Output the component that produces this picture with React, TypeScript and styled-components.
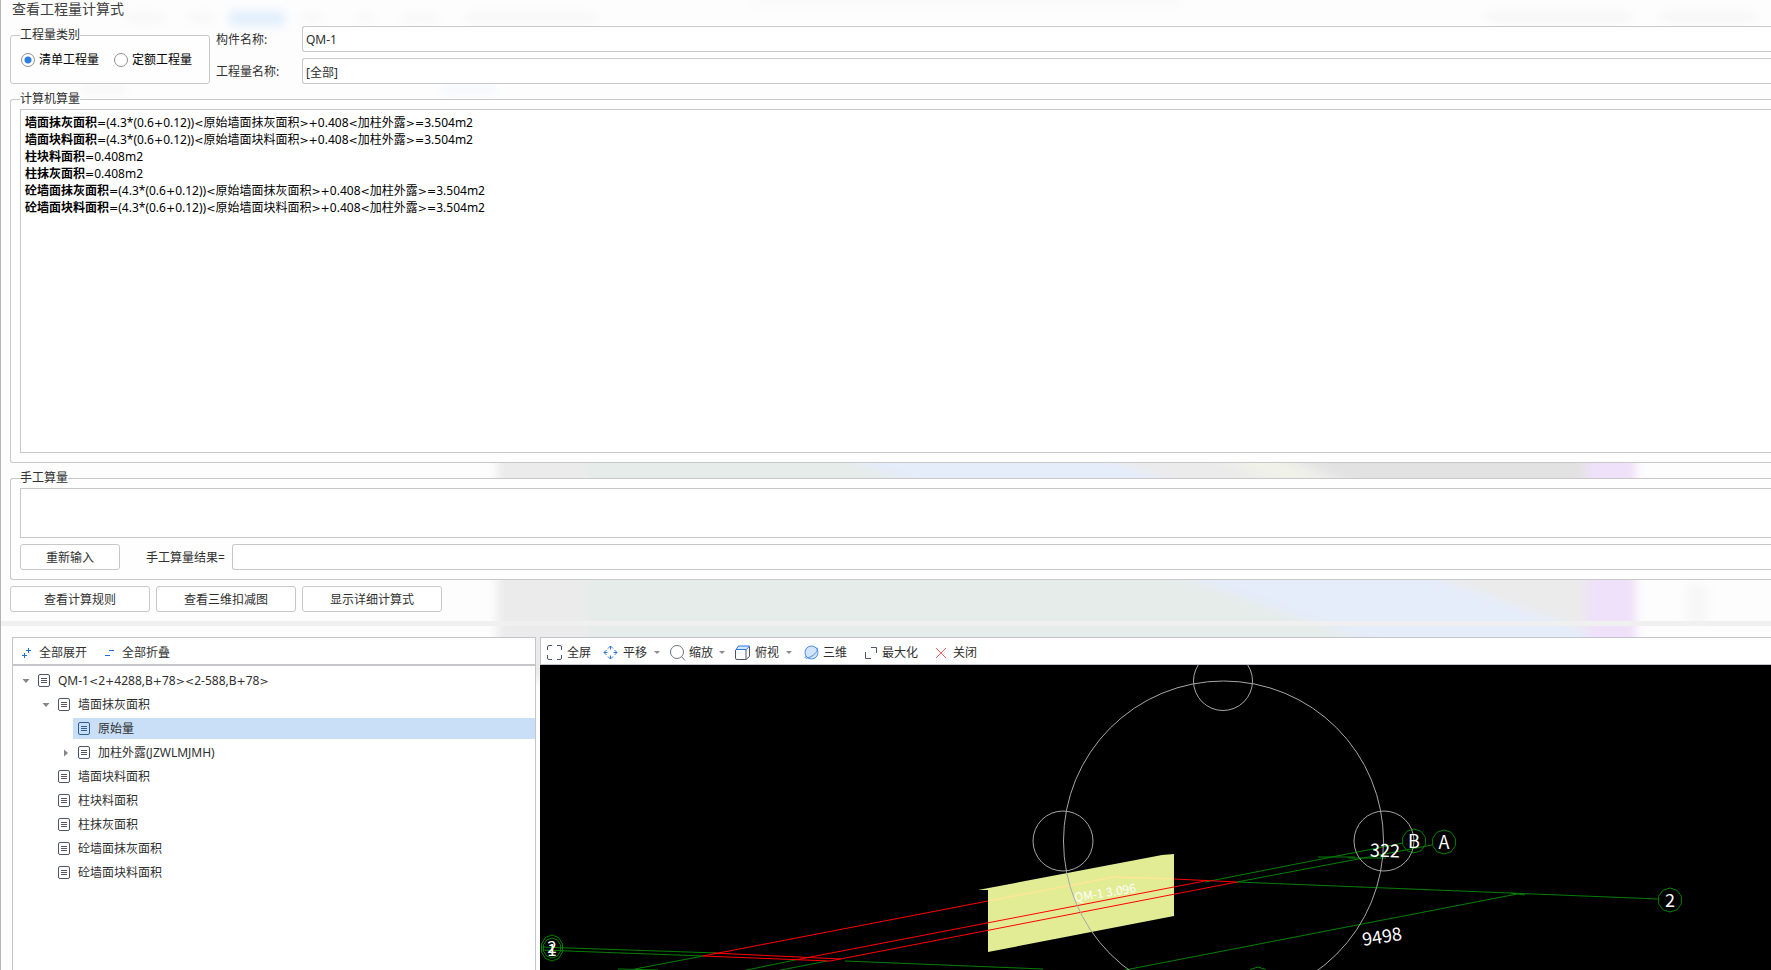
import React, { useState } from 'react';
import styled, { createGlobalStyle, css } from 'styled-components';

const GlobalStyle = createGlobalStyle`
  *, *::before, *::after { box-sizing: border-box; }
  html, body { margin: 0; padding: 0; }
  body, button, input, textarea {
    font-family: "Noto Sans", "Noto Sans CJK SC", sans-serif;
    font-size: 12px;
    line-height: 16px;
    color: #2f2f2f;
  }
`;

const line = '#c8c8c8';

const Dialog = styled.main`
  position: relative;
  display: flex;
  flex-direction: column;
  min-height: 100vh;
  overflow: hidden;
  background: #fdfdfd;
  border-left: 1px solid #b4b4b6;
`;

const Backdrop = styled.svg`
  position: absolute;
  top: 0;
  left: 0;
  width: 100%;
  height: 100%;
  pointer-events: none;
`;

const Content = styled.div`
  position: relative;
  display: flex;
  flex-direction: column;
  padding-left: 9px;
`;

const Title = styled.h1`
  margin: 0 0 9px 2px;
  font-size: 14px;
  font-weight: 400;
  line-height: 17px;
  color: #404040;
`;

const TopRow = styled.div`
  display: flex;
  align-items: flex-end;
  gap: 6px;
`;

const Group = styled.fieldset<{ $open?: boolean }>`
  min-width: 0;
  margin: 0;
  padding: 2px 0 9px 9px;
  background: #fefefe;
  border: 1px solid ${line};
  border-radius: 3px;
  ${(p) => p.$open && css`
    margin-top: 7px;
    border-right: 0;
    border-radius: 3px 0 0 3px;
  `}
`;

const KindGroup = styled(Group)`
  flex: none;
  width: 200px;
  padding: 9px 0 15px 10px;
`;

const Legend = styled.legend`
  padding: 0;
  line-height: 16px;
`;

const KindLegend = styled(Legend)`
  margin-left: -1px;
`;

const Radios = styled.div`
  display: flex;
  gap: 15px;
`;

const RadioLabel = styled.label`
  display: flex;
  align-items: center;
  gap: 4px;
  color: #000;
`;

const Radio = styled.input`
  appearance: none;
  width: 14px;
  height: 14px;
  margin: 0;
  border: 1px solid #8e8e8e;
  border-radius: 50%;
  background: #fff;
  &:checked {
    background: radial-gradient(circle, #2b7fe0 3px, #fff 4px);
  }
`;

const Names = styled.div`
  flex: 1;
  display: grid;
  grid-template-columns: 80px 1fr;
  align-items: center;
  gap: 6px;
`;

const NameLabel = styled.label`
  padding-top: 2px;
`;

const Field = styled.input`
  flex: 1;
  min-width: 0;
  height: 26px;
  padding: 1px 3px 0;
  background: #fff;
  border: 1px solid ${line};
  border-right: 0;
  border-radius: 3px 0 0 3px;
  outline: none;
`;

const Formulas = styled.div`
  height: 344px;
  padding: 4px;
  overflow: auto;
  background: #fff;
  border: 1px solid ${line};
  border-right: 0;
  color: #000;
`;

const Formula = styled.p`
  margin: 0;
  line-height: 17px;
  white-space: nowrap;
`;

const Operator = styled.span`
  font-family: "DejaVu Sans", sans-serif;
  font-size: 11px;
  line-height: 1;
`;

const ManualInput = styled.textarea`
  display: block;
  width: 100%;
  height: 50px;
  resize: none;
  background: #fff;
  border: 1px solid ${line};
  border-right: 0;
  outline: none;
`;

const ResultRow = styled.div`
  display: flex;
  align-items: center;
  margin-top: 6px;
`;

const ResultLabel = styled.label`
  margin: 0 7px 0 26px;
  padding-top: 2px;
`;

const Button = styled.button<{ $width: number }>`
  width: ${(p) => p.$width}px;
  height: 26px;
  padding: 2px 0 0;
  background: #fff;
  border: 1px solid ${line};
  border-radius: 3px;
`;

const Actions = styled.div`
  display: flex;
  gap: 6px;
  margin: 6px 0 9px;
`;

const Splitter = styled.div`
  position: relative;
  height: 5px;
  background: #f0f0f0;
`;

const Lower = styled.div`
  position: relative;
  flex: 1;
  display: flex;
  gap: 4px;
  padding: 11px 0 0 11px;
`;

const TreePanel = styled.section`
  flex: none;
  display: flex;
  flex-direction: column;
  width: 524px;
  background: #fff;
  border: 1px solid #c4c4cc;
  border-bottom: 0;
`;

const ViewPanel = styled.section`
  flex: 1;
  min-width: 0;
  display: flex;
  flex-direction: column;
  background: #fff;
  border-top: 1px solid #c4c4cc;
`;

const TreeTools = styled.div`
  display: flex;
  align-items: center;
  gap: 15px;
  height: 28px;
  padding: 3px 0 0 6px;
  border-bottom: 2px solid #c4c6ca;
`;

const ViewTools = styled.div`
  display: flex;
  align-items: center;
  height: 27px;
  padding: 3px 0 0 6px;
  border-left: 1px solid #c4c4cc;
  border-bottom: 1px solid #c4c4cc;
`;

const Tool = styled.button<{ $gap?: number; $after?: number }>`
  display: flex;
  align-items: center;
  gap: ${(p) => p.$gap ?? 4}px;
  margin-right: ${(p) => p.$after ?? 0}px;
  padding: 0;
  background: none;
  border: 0;
  white-space: nowrap;
  svg { flex: none; }
`;

const Caret = styled.span`
  width: 5px;
  margin-left: 3px;
  border: 3px solid transparent;
  border-top-color: #8b8b8b;
  border-bottom: 0;
`;

const Tree = styled.ul`
  flex: 1;
  margin: 0;
  padding: 4px 0 0;
  list-style: none;
`;

const TreeRow = styled.li<{ $level: number }>`
  display: flex;
  height: 21px;
  margin-bottom: 3px;
  padding-left: ${(p) => p.$level * 20}px;
`;

const Twist = styled.span`
  display: flex;
  align-items: center;
  justify-content: flex-end;
  width: 20px;
  padding-right: 3px;
`;

const NodeLabel = styled.span<{ $selected?: boolean }>`
  flex: 1;
  display: flex;
  align-items: center;
  gap: 8px;
  padding-left: 5px;
  color: #2f2f2f;
  background: ${(p) => (p.$selected ? '#c9dff8' : 'transparent')};
`;

const Canvas = styled.svg`
  flex: 1;
  width: 100%;
  min-height: 305px;
  background: #000;
  font-family: "Noto Sans CJK SC", sans-serif;
`;

const DocIcon = ({ selected }: { selected?: boolean }) => (
  <svg width="12" height="14" viewBox="0 0 12 14" fill="none" stroke={selected ? '#2f5f96' : '#4f5468'}>
    <rect x="0.5" y="0.5" width="11" height="12" rx="1.5" />
    <path d="M3 4.5h6M3 6.5h6M3 8.5h6" />
  </svg>
);

const ExpandIcon = () => (
  <svg width="16" height="16" fill="none" stroke="#1b6fd6">
    <path d="M3 10.5h5M5.5 8v5M7 5.5h5M9.5 3v5" />
  </svg>
);

const CollapseIcon = () => (
  <svg width="16" height="16" fill="none" stroke="#1b6fd6">
    <path d="M3 10.5h5M7 5.5h5" />
  </svg>
);

const FullIcon = () => (
  <svg width="16" height="16" fill="none" stroke="#50566a">
    <path d="M0.5 5V2Q0.5 0.5 2 0.5H5M10 0.5h3Q14.5 0.5 14.5 2V5M14.5 10v3Q14.5 14.5 13 14.5H10M5 14.5H2Q0.5 14.5 0.5 13V10" />
  </svg>
);

const PanIcon = () => (
  <svg width="16" height="16" fill="none" stroke="#2b78dc">
    <path d="M7.500 4.500V1M5 3.500L7.500 1l2.500 2.500M7.500 10.500v3.500M5 11.500l2.500 2.500 2.500-2.500M4.500 7.500H1M3.500 5l-2.500 2.500 2.500 2.500M10.500 7.500h3.500M11.500 5l2.500 2.500-2.500 2.500" />
  </svg>
);

const ZoomIcon = () => (
  <svg width="16" height="16" fill="none" stroke="#6d7280">
    <circle cx="7" cy="7" r="6.500" />
    <path d="M11.500 11.500L15 15.500" />
  </svg>
);

const CubeIcon = () => (
  <svg width="16" height="16" fill="none">
    <path d="M0.500 5V13Q0.500 14.500 2 14.500H11L14.500 11.500V1.500M11 4.500V14.500" stroke="#50566a" />
    <path d="M1 4.500L3.500 1H14.500L11.500 4.500Z" fill="#d5e6fc" stroke="#2b78dc" />
  </svg>
);

const SphereIcon = () => (
  <svg width="16" height="16" fill="none" stroke="#4a90e8">
    <circle cx="7.500" cy="7.500" r="6.500" fill="#d2e4fb" />
    <path d="M1.500 11.500C0 14 4 13.500 8 11C12 8.500 14.500 4.500 13 2.500" />
  </svg>
);

const MaxIcon = () => (
  <svg width="14" height="14" fill="none" stroke="#50566a">
    <path d="M7 1.500H12.500V7M1.500 6V12.500H7" />
  </svg>
);

const CloseIcon = () => (
  <svg width="12" height="12" fill="none" stroke="#f5605c">
    <path d="M1 1L11 11M11 1L1 11" />
  </svg>
);

const Arrow = ({ open }: { open: boolean }) => (
  <svg width="8" height="8" fill="#858585">
    <path d={open ? 'M0.500 2H7.500L4 6Z' : 'M2 0.500V7.500L6 4Z'} />
  </svg>
);

/* Sets the arithmetic and angle signs of an expression in the wider face. */
const Expression = ({ text }: { text: string }) => (
  <span>
    {text.split(/([=<>+]+)/).map((part, i) => (i % 2 ? <Operator key={i}>{part}</Operator> : part))}
  </span>
);

const decagon = (cx: number, cy: number, rx: number, ry: number) =>
  Array.from({ length: 10 }, (_, i) => {
    const a = (Math.PI * 2 * i) / 10 - Math.PI / 2;
    return `${(cx + rx * Math.cos(a)).toFixed(1)},${(cy + ry * Math.sin(a)).toFixed(1)}`;
  }).join(' ');

const formulas = [
  ['墙面抹灰面积', '=(4.3*(0.6+0.12))<原始墙面抹灰面积>+0.408<加柱外露>=3.504m2'],
  ['墙面块料面积', '=(4.3*(0.6+0.12))<原始墙面块料面积>+0.408<加柱外露>=3.504m2'],
  ['柱块料面积', '=0.408m2'],
  ['柱抹灰面积', '=0.408m2'],
  ['砼墙面抹灰面积', '=(4.3*(0.6+0.12))<原始墙面抹灰面积>+0.408<加柱外露>=3.504m2'],
  ['砼墙面块料面积', '=(4.3*(0.6+0.12))<原始墙面块料面积>+0.408<加柱外露>=3.504m2'],
];

type Node = { text: string; level: number; open?: boolean };

const nodes: Node[] = [
  { text: 'QM-1<2+4288,B+78><2-588,B+78>', level: 0, open: true },
  { text: '墙面抹灰面积', level: 1, open: true },
  { text: '原始量', level: 2 },
  { text: '加柱外露(JZWLMJMH)', level: 2, open: false },
  { text: '墙面块料面积', level: 1 },
  { text: '柱块料面积', level: 1 },
  { text: '柱抹灰面积', level: 1 },
  { text: '砼墙面抹灰面积', level: 1 },
  { text: '砼墙面块料面积', level: 1 },
];

const Haze = () => (
  <Backdrop aria-hidden="true">
    <defs>
      <filter id="soft" x="-20%" y="-20%" width="140%" height="140%">
        <feGaussianBlur stdDeviation="5" />
      </filter>
      <clipPath id="pane"><rect x="496" y="440" width="1139" height="240" /></clipPath>
    </defs>
    <g filter="url(#soft)">
      <rect x="228" y="11" width="56" height="15" fill="#e2effd" />
      <rect x="125" y="13" width="38" height="10" fill="#f7f7f8" />
      <rect x="188" y="13" width="24" height="10" fill="#f7f7f8" />
      <rect x="300" y="13" width="22" height="10" fill="#f8f8f8" />
      <rect x="356" y="13" width="16" height="10" fill="#f8f8f8" />
      <rect x="402" y="13" width="34" height="10" fill="#f8f8f8" />
      <rect x="465" y="13" width="130" height="10" fill="#f7f7f7" />
      <rect x="750" y="0" width="430" height="4" fill="#f6f6f7" />
      <rect x="1485" y="12" width="145" height="10" fill="#f6f6f7" />
      <rect x="1660" y="12" width="95" height="10" fill="#f6f6f7" />
      <rect x="80" y="86" width="45" height="8" fill="#f6f6f6" />
      <rect x="440" y="86" width="55" height="8" fill="#f3f7fd" />
      <rect x="1685" y="584" width="22" height="40" fill="#f7f7f7" />
      <g clipPath="url(#pane)">
        <rect x="490" y="440" width="1145" height="240" fill="#e6ece9" />
        <rect x="480" y="440" width="105" height="240" fill="#ebebeb" />
        <path d="M789 440L1477 680H1800V440Z" fill="#e5ecfa" />
        <path d="M1055 440L1720 680V440Z" fill="#ebebeb" />
        <path d="M1180 440H1250L1340 490H1290Z" fill="#f0f1e9" />
        <path d="M1250 440H1640V500H1390Z" fill="#e2e2e2" />
        <rect x="1585" y="440" width="60" height="240" fill="#efe1f9" />
      </g>
    </g>
  </Backdrop>
);

const Scene = () => (
  <Canvas role="img" aria-label="QM-1">
    <g transform="translate(-540 -665)">
      <path d="M978 890L1162 855L1174 854V916L988 952V890Z" fill="#e2ec95" />
      <path d="M988 901L1114 877L1174 879" fill="none" stroke="#ffe694" strokeWidth="1.500" />
      <g fill="none" stroke="#008000">
        <path d="M541 947L717 953M541 950L703 956L635 969M618 969L658 970M845 961L1043 969M795 960L742 971M827 961L776 971" />
        <path d="M1205 882L1403 843M1237 882L1432 845M1318 857H1355M1348 858H1386M1237 882L1658 899M1511 893L1525 895M1517 894L1120 971" />
        <polygon points={decagon(552, 948, 11, 13)} />
        <polygon points={decagon(552, 948, 9, 10)} />
        <polygon points={decagon(1414, 841, 12, 12)} />
        <polygon points={decagon(1444, 842, 12, 12)} />
        <polygon points={decagon(1670, 900, 12, 12)} />
        <polygon points={decagon(1258, 979, 12, 12)} />
      </g>
      <path
        d="M703 956L988 901M1174 879L1237 882M795 960L1205 881M830 961L1237 882M713 953L841 959M703 956L830 961"
        fill="none" stroke="#ff0000"
      />
      <g fill="none" stroke="#a6a6a6">
        <circle cx="1223.500" cy="841" r="160" />
        <circle cx="1223" cy="681" r="29.500" />
        <circle cx="1063" cy="841" r="30" />
        <circle cx="1384" cy="841" r="30" />
      </g>
      <g fill="#fff" fontSize="18" textAnchor="middle">
        <text x="552" y="953" fontSize="17">2</text>
        <text x="552" y="956" fontSize="17">1</text>
        <text x="1414" y="848">B</text>
        <text x="1444" y="849">A</text>
        <text x="1670" y="907">2</text>
        <text x="1385" y="857" transform="rotate(2 1385 850)">322</text>
        <text x="1382" y="943" transform="rotate(-9 1382 937)">9498</text>
        <text x="1105" y="897" fontSize="12" transform="rotate(-9 1105 892)">QM-1 3.096</text>
      </g>
    </g>
  </Canvas>
);

export default function App() {
  const [kind, setKind] = useState('list');
  const [selected, setSelected] = useState('原始量');

  return (
    <>
      <GlobalStyle />
      <Dialog>
        <Haze />
        <Content>
          <Title>查看工程量计算式</Title>
          <TopRow>
            <KindGroup>
              <KindLegend>工程量类别</KindLegend>
              <Radios>
                <RadioLabel>
                  <Radio type="radio" name="kind" checked={kind === 'list'} onChange={() => setKind('list')} />
                  清单工程量
                </RadioLabel>
                <RadioLabel>
                  <Radio type="radio" name="kind" checked={kind === 'quota'} onChange={() => setKind('quota')} />
                  定额工程量
                </RadioLabel>
              </Radios>
            </KindGroup>
            <Names>
              <NameLabel htmlFor="component">构件名称:</NameLabel>
              <Field id="component" defaultValue="QM-1" />
              <NameLabel htmlFor="quantity">工程量名称:</NameLabel>
              <Field id="quantity" defaultValue="[全部]" />
            </Names>
          </TopRow>

          <Group $open>
            <Legend>计算机算量</Legend>
            <Formulas>
              {formulas.map(([name, value]) => (
                <Formula key={name}><b>{name}</b><Expression text={value} /></Formula>
              ))}
            </Formulas>
          </Group>

          <Group $open>
            <Legend>手工算量</Legend>
            <ManualInput aria-label="手工算量" />
            <ResultRow>
              <Button type="button" $width={100}>重新输入</Button>
              <ResultLabel htmlFor="result">手工算量结果=</ResultLabel>
              <Field id="result" />
            </ResultRow>
          </Group>

          <Actions>
            <Button type="button" $width={140}>查看计算规则</Button>
            <Button type="button" $width={140}>查看三维扣减图</Button>
            <Button type="button" $width={140}>显示详细计算式</Button>
          </Actions>
        </Content>

        <Splitter />

        <Lower>
          <TreePanel>
            <TreeTools>
              <Tool type="button"><ExpandIcon />全部展开</Tool>
              <Tool type="button"><CollapseIcon />全部折叠</Tool>
            </TreeTools>
            <Tree role="tree">
              {nodes.map((n) => (
                <TreeRow
                  key={n.text}
                  role="treeitem"
                  aria-selected={n.text === selected}
                  $level={n.level}
                  onClick={() => setSelected(n.text)}
                >
                  <Twist>{n.open !== undefined && <Arrow open={n.open} />}</Twist>
                  <NodeLabel $selected={n.text === selected}>
                    <DocIcon selected={n.text === selected} />
                    <Expression text={n.text} />
                  </NodeLabel>
                </TreeRow>
              ))}
            </Tree>
          </TreePanel>

          <ViewPanel>
            <ViewTools>
              <Tool type="button" $after={12}><FullIcon />全屏</Tool>
              <Tool type="button" $after={10}><PanIcon />平移<Caret /></Tool>
              <Tool type="button" $gap={3} $after={10}><ZoomIcon />缩放<Caret /></Tool>
              <Tool type="button" $after={12}><CubeIcon />俯视<Caret /></Tool>
              <Tool type="button" $gap={3} $after={17}><SphereIcon />三维</Tool>
              <Tool type="button" $after={17}><MaxIcon />最大化</Tool>
              <Tool type="button" $gap={6}><CloseIcon />关闭</Tool>
            </ViewTools>
            <Scene />
          </ViewPanel>
        </Lower>
      </Dialog>
    </>
  );
}
